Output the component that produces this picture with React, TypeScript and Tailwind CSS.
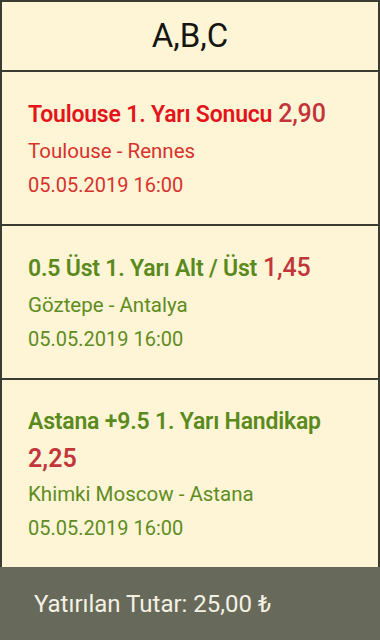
import React from 'react';

interface Bet {
  title: string;
  odd: string;
  match: string;
  date: string;
  tone: 'red' | 'green';
  oddOnNewLine?: boolean;
}

const bets: Bet[] = [
  { title: 'Toulouse 1. Yarı Sonucu', odd: '2,90', match: 'Toulouse - Rennes', date: '05.05.2019 16:00', tone: 'red' },
  { title: '0.5 Üst 1. Yarı Alt / Üst', odd: '1,45', match: 'Göztepe - Antalya', date: '05.05.2019 16:00', tone: 'green' },
  { title: 'Astana +9.5 1. Yarı Handikap', odd: '2,25', match: 'Khimki Moscow - Astana', date: '05.05.2019 16:00', tone: 'green', oddOnNewLine: true },
];

function BetCard({ bet }: { bet: Bet }) {
  const titleColor = bet.tone === 'red' ? 'text-[#e3141a]' : 'text-[#5a8a1d]';
  const subColor = bet.tone === 'red' ? 'text-[#d8322e]' : 'text-[#5f8c22]';
  return (
    <div className="border-t-2 border-[#3b3b36] bg-[#fdf5d6] pl-[26px] pr-4 pt-[23px] pb-[22px]">
      <div className={`text-[23px] leading-[38px] font-semibold tracking-[-0.2px] ${titleColor}`}>
        {bet.title}
        {!bet.oddOnNewLine && <span className="ml-[6px] text-[25px] font-medium text-[#c2363b]">{bet.odd}</span>}
      </div>
      {bet.oddOnNewLine && (
        <div className="text-[25px] leading-[36px] font-semibold text-[#c2363b]">{bet.odd}</div>
      )}
      <div className={`text-[20.5px] leading-[34px] ${subColor}`}>{bet.match}</div>
      <div className={`text-[20px] leading-[34px] ${subColor}`}>{bet.date}</div>
    </div>
  );
}

export default function App() {
  return (
    <div className="flex h-[640px] w-[380px] flex-col overflow-hidden bg-[#3b3b36] pt-[2px] font-['Roboto',sans-serif]">
      <div className="mx-[2px] flex flex-1 flex-col bg-[#fdf5d6]">
        <div className="flex h-[68px] items-center justify-center text-[33px] text-[#151511]">A,B,C</div>
        {bets.map((bet) => (
          <BetCard key={bet.title} bet={bet} />
        ))}
        <div className="flex-1" />
      </div>
      <div className="flex h-[74px] items-center bg-[#676a5a] pl-[34px] text-[24px] text-[#f4f1e4]">
        Yatırılan Tutar: 25,00 ₺
      </div>
    </div>
  );
}
